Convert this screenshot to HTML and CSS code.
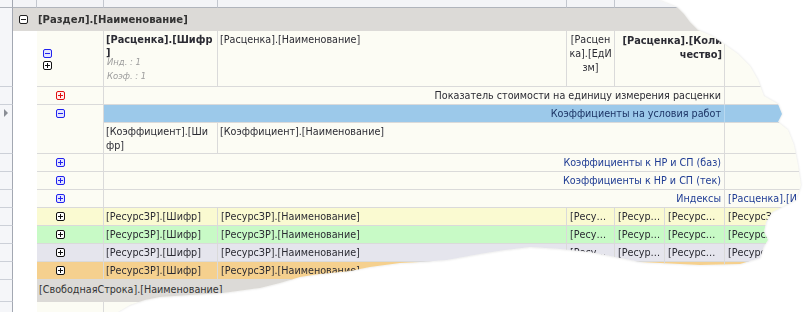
FILE: index.html
```html
<!DOCTYPE html>
<html lang="ru">
<head>
    <meta charset="UTF-8">
    <title>Шаблон сметы</title>
    <link rel="stylesheet" href="styles.css">
</head>
<body>
  <div class="paper">
    <div class="sheet">

      <!-- column headers (cut off at the top) -->
      <div class="row hdr">
        <div class="ind"></div>
        <div class="indent"></div>
        <div class="c c-ico"></div>
        <div class="c c-code"></div>
        <div class="c c-name"></div>
        <div class="c c-unit"></div>
        <div class="c c-qty"></div>
        <div class="c c-rest"></div>
      </div>

      <!-- group row -->
      <div class="row group">
        <div class="ind"></div>
        <div class="group-body">
          <svg class="tg" width="9" height="9" viewBox="0 0 9 9"><rect x=".5" y=".5" width="8" height="8" rx="1.5" fill="#fff" stroke="#222"/><path d="M2 4.5h5" stroke="#222"/></svg>
          <b>[Раздел].[Наименование]</b>
        </div>
      </div>

      <!-- rate row -->
      <div class="row rate">
        <div class="ind"></div>
        <div class="indent"></div>
        <div class="c c-ico ico-stack">
          <svg class="tg" width="9" height="9" viewBox="0 0 9 9"><rect x=".5" y=".5" width="8" height="8" rx="1.5" fill="#e4e6ff" stroke="#2222ee"/><path d="M2 4.5h5" stroke="#2222ee"/></svg>
          <svg class="tg" width="9" height="9" viewBox="0 0 9 9"><rect x=".5" y=".5" width="8" height="8" rx="1.5" fill="#fff" stroke="#111"/><path d="M2 4.5h5M4.5 2v5" stroke="#111"/></svg>
        </div>
        <div class="c c-code top">
          <b>[Расценка].[Шифр<br>]</b>
          <div class="note first">Инд. : 1</div>
          <div class="note">Коэф. : 1</div>
        </div>
        <div class="c c-name top">[Расценка].[Наименование]</div>
        <div class="c c-unit top center">[Расценка].[ЕдИзм]</div>
        <div class="c c-qty top right"><b>[Расценка].[Количество]</b></div>
        <div class="c c-rest"></div>
      </div>

      <!-- cost indicator -->
      <div class="row sub">
        <div class="ind"></div>
        <div class="indent"></div>
        <div class="c c-ico">
          <svg class="tg" width="9" height="9" viewBox="0 0 9 9"><rect x=".5" y=".5" width="8" height="8" rx="1.5" fill="#fff0f0" stroke="#e01010"/><path d="M2 4.5h5M4.5 2v5" stroke="#e01010"/></svg>
        </div>
        <div class="c c-span right">Показатель стоимости на единицу измерения расценки</div>
        <div class="c c-rest"></div>
      </div>

      <!-- work conditions coefficients (current row) -->
      <div class="row coef">
        <div class="ind"><span class="cur"></span></div>
        <div class="indent"></div>
        <div class="c c-ico">
          <svg class="tg" width="9" height="9" viewBox="0 0 9 9"><rect x=".5" y=".5" width="8" height="8" rx="1.5" fill="#e4e6ff" stroke="#2222ee"/><path d="M2 4.5h5" stroke="#2222ee"/></svg>
        </div>
        <div class="coef-body">
          <div class="coef-bar">
            <div class="c c-span right">Коэффициенты на условия работ</div>
            <div class="c c-rest"></div>
          </div>
          <div class="coef-line">
            <div class="c c-code top">[Коэффициент].[Шифр]</div>
            <div class="c c-wide top">[Коэффициент].[Наименование]</div>
            <div class="c c-rest"></div>
          </div>
        </div>
      </div>

      <div class="row sub blue-text">
        <div class="ind"></div>
        <div class="indent"></div>
        <div class="c c-ico">
          <svg class="tg" width="9" height="9" viewBox="0 0 9 9"><rect x=".5" y=".5" width="8" height="8" rx="1.5" fill="#e4e6ff" stroke="#2222ee"/><path d="M2 4.5h5M4.5 2v5" stroke="#2222ee"/></svg>
        </div>
        <div class="c c-span right">Коэффициенты к НР и СП (баз)</div>
        <div class="c c-rest"></div>
      </div>

      <div class="row sub blue-text">
        <div class="ind"></div>
        <div class="indent"></div>
        <div class="c c-ico">
          <svg class="tg" width="9" height="9" viewBox="0 0 9 9"><rect x=".5" y=".5" width="8" height="8" rx="1.5" fill="#e4e6ff" stroke="#2222ee"/><path d="M2 4.5h5M4.5 2v5" stroke="#2222ee"/></svg>
        </div>
        <div class="c c-span right">Коэффициенты к НР и СП (тек)</div>
        <div class="c c-rest"></div>
      </div>

      <div class="row sub blue-text">
        <div class="ind"></div>
        <div class="indent"></div>
        <div class="c c-ico">
          <svg class="tg" width="9" height="9" viewBox="0 0 9 9"><rect x=".5" y=".5" width="8" height="8" rx="1.5" fill="#e4e6ff" stroke="#2222ee"/><path d="M2 4.5h5M4.5 2v5" stroke="#2222ee"/></svg>
        </div>
        <div class="c c-span right">Индексы</div>
        <div class="c c-rest clip">[Расценка].[Индекс]</div>
      </div>

      <!-- resources -->
      <div class="row res res-yellow">
        <div class="ind"></div>
        <div class="indent"></div>
        <div class="c c-ico">
          <svg class="tg" width="9" height="9" viewBox="0 0 9 9"><rect x=".5" y=".5" width="8" height="8" rx="1.5" fill="#fff" stroke="#111"/><path d="M2 4.5h5M4.5 2v5" stroke="#111"/></svg>
        </div>
        <div class="c c-code">[РесурсЗР].[Шифр]</div>
        <div class="c c-name">[РесурсЗР].[Наименование]</div>
        <div class="c c-unit">[РесурсЗР].[ЕдИзм]</div>
        <div class="c c-q1">[РесурсЗР].[Норма]</div>
        <div class="c c-q2">[РесурсЗР].[Количество]</div>
        <div class="c c-rest clip">[РесурсЗР].[Цена]</div>
      </div>

      <div class="row res res-green">
        <div class="ind"></div>
        <div class="indent"></div>
        <div class="c c-ico">
          <svg class="tg" width="9" height="9" viewBox="0 0 9 9"><rect x=".5" y=".5" width="8" height="8" rx="1.5" fill="#fff" stroke="#111"/><path d="M2 4.5h5M4.5 2v5" stroke="#111"/></svg>
        </div>
        <div class="c c-code">[РесурсЗР].[Шифр]</div>
        <div class="c c-name">[РесурсЗР].[Наименование]</div>
        <div class="c c-unit">[РесурсЗР].[ЕдИзм]</div>
        <div class="c c-q1">[РесурсЗР].[Норма]</div>
        <div class="c c-q2">[РесурсЗР].[Количество]</div>
        <div class="c c-rest clip">[РесурсЗР].[Цена]</div>
      </div>

      <div class="row res res-grey">
        <div class="ind"></div>
        <div class="indent"></div>
        <div class="c c-ico">
          <svg class="tg" width="9" height="9" viewBox="0 0 9 9"><rect x=".5" y=".5" width="8" height="8" rx="1.5" fill="#fff" stroke="#111"/><path d="M2 4.5h5M4.5 2v5" stroke="#111"/></svg>
        </div>
        <div class="c c-code">[РесурсЗР].[Шифр]</div>
        <div class="c c-name">[РесурсЗР].[Наименование]</div>
        <div class="c c-unit">[РесурсЗР].[ЕдИзм]</div>
        <div class="c c-q1">[РесурсЗР].[Норма]</div>
        <div class="c c-q2">[РесурсЗР].[Количество]</div>
        <div class="c c-rest clip">[РесурсЗР].[Цена]</div>
      </div>

      <div class="row res res-orange">
        <div class="ind"></div>
        <div class="indent"></div>
        <div class="c c-ico">
          <svg class="tg" width="9" height="9" viewBox="0 0 9 9"><rect x=".5" y=".5" width="8" height="8" rx="1.5" fill="#fff" stroke="#111"/><path d="M2 4.5h5M4.5 2v5" stroke="#111"/></svg>
        </div>
        <div class="c c-code">[РесурсЗР].[Шифр]</div>
        <div class="c c-name">[РесурсЗР].[Наименование]</div>
        <div class="c c-unit">[РесурсЗР].[ЕдИзм]</div>
        <div class="c c-q1">[РесурсЗР].[Норма]</div>
        <div class="c c-q2">[РесурсЗР].[Количество]</div>
        <div class="c c-rest clip">[РесурсЗР].[Цена]</div>
      </div>

      <!-- free text row -->
      <div class="row free">
        <div class="ind"></div>
        <div class="indent"></div>
        <div class="free-body">[СвободнаяСтрока].[Наименование]</div>
      </div>

      <div class="row tail">
        <div class="ind"></div>
        <div class="indent"></div>
        <div class="c c-ico"></div>
        <div class="c c-code"></div>
        <div class="c c-rest"></div>
      </div>

    </div>
  </div>
</body>
</html>
```
FILE: styles.css
```css
body { margin: 0; background: #fff; font-family: "DejaVu Sans Condensed", "Liberation Sans", sans-serif; font-size: 10.7px; color: #2b2b33; }
.paper { width: 803px; height: 312px; filter: drop-shadow(0 0 1px rgba(0, 0, 0, .12)); }
.sheet { width: 803px; height: 312px; overflow: hidden; background: #fcfcf4;
  clip-path: polygon(0 0, 658px 0, 668px 4px, 678px 8px, 684px 14px, 690px 22px, 698px 30px, 712px 36px, 724px 44px, 738px 54px, 750px 66px, 758px 80px, 764px 96px, 778px 104px, 782px 114px, 778px 122px, 788px 130px, 794px 145px, 798px 165px, 801px 185px, 796px 200px, 784px 206px, 772px 212px, 766px 222px, 764px 232px, 768px 240px, 764px 246px, 760px 258px, 740px 264px, 700px 265px, 660px 263px, 640px 262px, 610px 256px, 590px 252px, 560px 249px, 530px 247px, 505px 250px, 480px 254px, 447px 260px, 420px 262px, 400px 263px, 370px 267px, 350px 271px, 320px 274px, 300px 277px, 280px 283px, 260px 288px, 223px 293px, 190px 295px, 160px 297px, 145px 300px, 130px 305px, 118px 312px, 0 312px); }

.row { display: flex; height: 18px; line-height: 17px; }
.row > div, .coef-body > div > div { box-sizing: border-box; }
.ind { flex: none; width: 13px; background: #f5f6f9; border-right: 1px solid #a3a8b2; border-bottom: 1px solid #ccd0d8; position: relative; }
.indent { flex: none; width: 24px; background: #fff; }
.c { flex: none; border-right: 1px solid #dadada; border-bottom: 1px solid #dadada; padding: 0 2px; white-space: nowrap; overflow: hidden; text-overflow: ellipsis; }
.c-ico { width: 67px; padding: 0 0 0 19px; }
.c-code { width: 114px; }
.c-name { width: 349px; }
.c-unit { width: 48px; padding: 0 3px; }
.c-qty { width: 110px; }
.c-q1 { width: 50px; padding: 0 3px; }
.c-q2 { width: 60px; padding: 0 3px; }
.c-span { width: 621px; }
.c-wide { width: 507px; }
.c-rest { flex: 1; border-right: none; padding: 0 3px; }
.clip { text-overflow: clip; }
.right { text-align: right; }
.center { text-align: center; }
.top { white-space: normal; word-break: break-all; line-height: 14px; padding-top: 2px; }

.tg { display: block; }
.c-ico .tg { margin-top: 4px; }

.hdr { height: 8px; }
.hdr .ind { border-bottom-color: #b0b4bc; }
.hdr .indent, .hdr .c { background: #f3f4f7; border-bottom: 1px solid #b0b4bc; border-right-color: #c3c7cf; }
.hdr .indent { border-right: 1px solid #c3c7cf; }

.group { height: 23px; }
.group .ind { border-bottom: none; }
.group-body { flex: 1; display: flex; align-items: center; gap: 10px; padding-left: 6px; background: #dcdad7; color: #333; font-size: 11.2px; }

.rate { height: 56px; }
.ico-stack { padding-left: 6px; padding-top: 15px; }
.ico-stack .tg { margin: 3px 0 0; }
.rate b { font-size: 10.9px; }
.rate .c-code { padding-right: 0; }
.rate .c-code b { display: block; white-space: nowrap; line-height: 13px; }
.note { font-style: italic; font-size: 9.4px; color: #9c9c9c; line-height: 14px; padding-left: 1px; }
.note.first { margin-top: -4px; }
.c-unit.top { padding: 2px 1px 0; }
.c-qty b { display: block; padding-top: 1px; }

.sub .right { padding-right: 3px; }
.blue-text .c-span, .blue-text .c-rest { color: #1f3c94; }

.coef { height: 49px; }
.coef-body { flex: 1; display: flex; flex-direction: column; }
.coef-bar { display: flex; height: 18px; background: #9cc9ea; color: #1d3566; }
.coef-bar .c { border-right-color: #b8d8ef; border-bottom-color: #dadada; }
.coef-bar .right { padding-right: 3px; }
.coef-line { display: flex; flex: 1; }
.cur { position: absolute; left: 4px; top: 4px; border-left: 4px solid #8a8e96; border-top: 4px solid transparent; border-bottom: 4px solid transparent; }

.res .c { padding-left: 3px; }
.res .c-code { padding-left: 2px; }
.res-yellow .c { background: #fafad1; }
.res-green .c { background: #c8fac6; }
.res-grey .c { background: #e5e5ed; }
.res-orange .c { background: #f5d08e; }
.res .c-ico { padding-left: 19px; }

.free { height: 22px; line-height: 19px; }
.free-body { flex: 1; background: #dcdad7; padding-left: 2px; color: #333; }
.tail { flex: 1; height: 20px; }
.tail .ind { border-bottom: none; }
```
